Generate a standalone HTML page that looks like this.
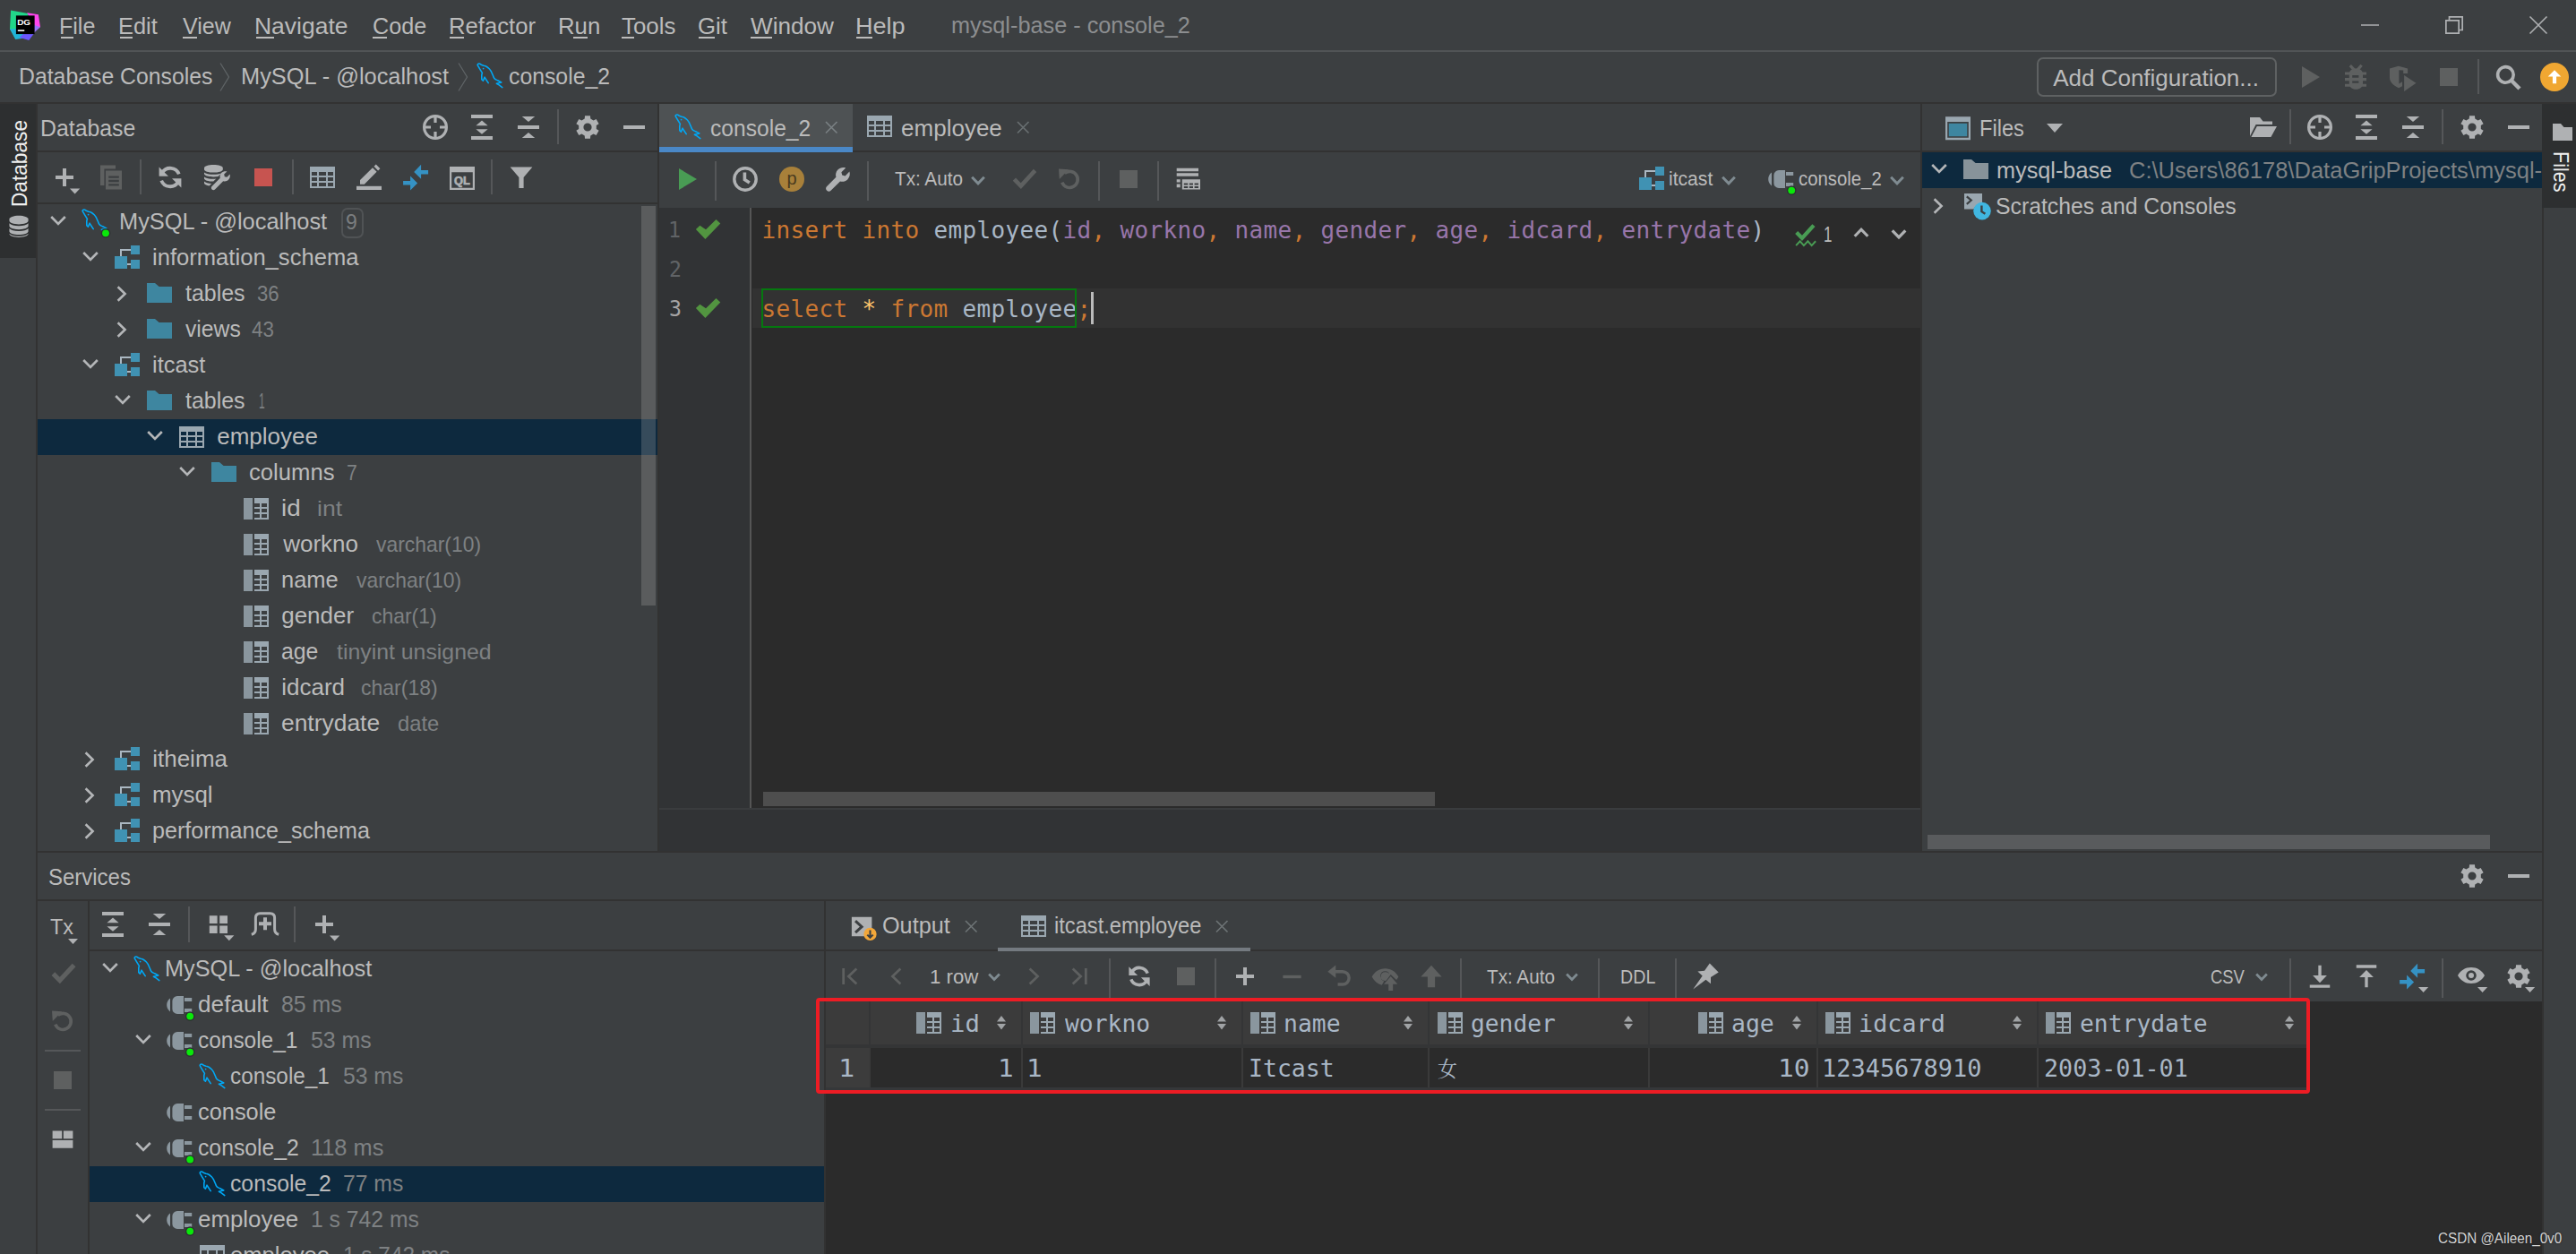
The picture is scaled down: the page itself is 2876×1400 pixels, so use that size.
<!DOCTYPE html>
<html lang="en"><head><meta charset="utf-8"><title>mysql-base - console_2</title>
<style>
html,body{margin:0;padding:0;background:#3c3f41;}
body{width:2876px;height:1400px;position:relative;overflow:hidden;font-family:"Liberation Sans",sans-serif;}
#root,#root div{position:absolute;}
#root>div[id]{left:0;top:0;width:0;height:0;}
#root{left:0;top:0;width:2876px;height:1400px;overflow:hidden;}
#root span{position:absolute;white-space:pre;transform-origin:0 50%;}
#root svg{position:absolute;overflow:visible;}
.mono{font-family:"DejaVu Sans Mono","Liberation Mono",monospace;}
.cjk{font-family:"Liberation Serif","Noto Serif CJK SC",serif;}
</style></head>
<body><div id="root">
<div id="titlebar">
<svg style="left:11.0px;top:11.0px;" width="34" height="34" viewBox="0 0 32 32"><path fill="#21d789" d="M1 0.500L20 4 6 31 0 20z"/><path fill="#22b4d8" d="M0 20l6 11 14-2-3-9z"/><path fill="#9775f8" d="M20 4l12 14-12 11-6-3z"/><path fill="#ff45ed" d="M18 3l12 2 2 13-6-2z"/><path fill="#6b57ff" d="M10 29l10 3 6-8-8-2z"/><rect x="6.500" y="6" width="19.500" height="19.500" fill="#000"/><text x="7.700" y="16.200" font-size="9.400" font-weight="bold" fill="#fff" font-family="Liberation Sans, sans-serif">DG</text><rect x="8.300" y="21" width="7" height="1.500" fill="#fff"/></svg>
<span style="left:66.47px;top:16.30px;font-size:26px;line-height:26px;color:#bbbbbb;transform:scaleX(0.9636);">File</span>
<span style="left:132.44px;top:16.30px;font-size:26px;line-height:26px;color:#bbbbbb;transform:scaleX(0.9776);">Edit</span>
<span style="left:204.40px;top:16.30px;font-size:26px;line-height:26px;color:#bbbbbb;transform:scaleX(0.9624);">View</span>
<span style="left:284.36px;top:16.30px;font-size:26px;line-height:26px;color:#bbbbbb;transform:scaleX(1.0184);">Navigate</span>
<span style="left:415.83px;top:16.30px;font-size:26px;line-height:26px;color:#bbbbbb;transform:scaleX(0.9688);">Code</span>
<span style="left:500.72px;top:16.30px;font-size:26px;line-height:26px;color:#bbbbbb;transform:scaleX(0.9875);">Refactor</span>
<span style="left:623.42px;top:16.30px;font-size:26px;line-height:26px;color:#bbbbbb;transform:scaleX(0.9901);">Run</span>
<span style="left:694.40px;top:16.30px;font-size:26px;line-height:26px;color:#bbbbbb;transform:scaleX(0.9951);">Tools</span>
<span style="left:779.41px;top:16.30px;font-size:26px;line-height:26px;color:#bbbbbb;transform:scaleX(0.9909);">Git</span>
<span style="left:838.40px;top:16.30px;font-size:26px;line-height:26px;color:#bbbbbb;transform:scaleX(1.0054);">Window</span>
<span style="left:954.72px;top:16.30px;font-size:26px;line-height:26px;color:#bbbbbb;transform:scaleX(1.0409);">Help</span>
<div style="left:68px;top:40.5px;width:14px;height:2px;background:#bbbbbb;"></div>
<div style="left:134px;top:40.5px;width:14px;height:2px;background:#bbbbbb;"></div>
<div style="left:204px;top:40.5px;width:16px;height:2px;background:#bbbbbb;"></div>
<div style="left:285.5px;top:40.5px;width:20.0px;height:2px;background:#bbbbbb;"></div>
<div style="left:416px;top:40.5px;width:16px;height:2px;background:#bbbbbb;"></div>
<div style="left:502px;top:40.5px;width:16px;height:2px;background:#bbbbbb;"></div>
<div style="left:640px;top:40.5px;width:16px;height:2px;background:#bbbbbb;"></div>
<div style="left:694px;top:40.5px;width:14px;height:2px;background:#bbbbbb;"></div>
<div style="left:780px;top:40.5px;width:18px;height:2px;background:#bbbbbb;"></div>
<div style="left:838px;top:40.5px;width:24px;height:2px;background:#bbbbbb;"></div>
<div style="left:956px;top:40.5px;width:18px;height:2px;background:#bbbbbb;"></div>
<span style="left:1062.03px;top:14.60px;font-size:26px;line-height:26px;color:#8c8e90;transform:scaleX(0.9718);">mysql-base - console_2</span>
<svg style="left:2636px;top:18px;" width="20" height="20" viewBox="0 0 20 20"><path stroke="#afb1b3" stroke-width="1.500" d="M0 10h20"/></svg>
<svg style="left:2730px;top:18px;" width="20" height="20" viewBox="0 0 20 20"><path fill="none" stroke="#afb1b3" stroke-width="1.700" d="M0.850 4.850h14.300v14.300H0.850zM4.500 4.500V0.850h14.650V15.500H15.500"/></svg>
<svg style="left:2824px;top:18px;" width="20" height="20" viewBox="0 0 20 20"><path stroke="#afb1b3" stroke-width="1.600" d="M0.500 0.500l19 19M19.500 0.500l-19 19"/></svg>
<div style="left:0px;top:56px;width:2876px;height:2px;background:#515456;"></div>
</div>
<div id="navbar">
<span style="left:21.49px;top:72.00px;font-size:26px;line-height:26px;color:#bbbbbb;transform:scaleX(0.9541);">Database Consoles</span>
<svg style="left:244px;top:70px;" width="14" height="32" viewBox="0 0 14 32"><path fill="none" stroke="#5f6466" stroke-width="1.300" d="M2 0.500L11.500 16 2 31.500"/></svg>
<span style="left:269.45px;top:72.00px;font-size:26px;line-height:26px;color:#bbbbbb;transform:scaleX(0.9757);">MySQL - @localhost</span>
<svg style="left:510px;top:70px;" width="14" height="32" viewBox="0 0 14 32"><path fill="none" stroke="#5f6466" stroke-width="1.300" d="M2 0.500L11.500 16 2 31.500"/></svg>
<svg style="left:530.5px;top:68.5px;" width="32" height="32" viewBox="0 0 16 16"><path fill="none" stroke="#00a8f5" stroke-width="0.8" stroke-linejoin="round" stroke-linecap="round" d="M7.100 11.800L5 8.600 4.200 10.600 3.400 9.800V7.400L3.700 6.200 2.450 4.200 1.200 2.100C.900 1.500 1.300 1 2 1c.500 0 .800.500 1.100.600l1.300.500c.600.100 1.100.300 1.600.500.600.300 1.100.800 1.600 1.300.500.500.900 1.100 1.200 1.700l1 2.250c.200.650.400 1.250.800 1.600.500.450 1.100.650 1.700.950l2.100 1.100-2.700.650 1.400.800 1.800 1.350"/><circle cx="4.300" cy="3.800" r="0.450" fill="#00a8f5"/></svg>
<span style="left:568.45px;top:72.00px;font-size:26px;line-height:26px;color:#bbbbbb;transform:scaleX(0.9532);">console_2</span>
<div style="left:2274px;top:64px;width:264px;height:40px;border:2px solid #5e6162;border-radius:7px"></div>
<span style="left:2292.20px;top:74.00px;font-size:26px;line-height:26px;color:#bbbbbb;">Add Configuration...</span>
<svg style="left:2563.0px;top:70.0px;" width="32" height="32" viewBox="0 0 16 16"><path fill="#5e6060" d="M3.5 2l10 6-10 6z"/></svg>
<svg style="left:2614.0px;top:70.0px;" width="32" height="32" viewBox="0 0 16 16"><path stroke="#5e6060" stroke-width="1.600" d="M4.900 1.600L7.400 4.200M11.300 1.400L8.900 4.200"/><path fill="#5e6060" d="M2 5.300h12v1.500H2zM2 8.500h12v1.600H2zM2 11.900h12v1.500H2z"/><path fill="#5e6060" fill-rule="evenodd" d="M4.400 6c0-1.600 1.600-2.800 3.800-2.800S12 4.400 12 6v5.500c0 2-1.600 3.400-3.800 3.400s-3.800-1.400-3.800-3.400zM6.100 7v1.400h3.600V7zM6.100 10.100v1.300h3.600v-1.300z"/></svg>
<svg style="left:2667.0px;top:70.0px;" width="32" height="32" viewBox="0 0 16 16"><path fill="#5e6060" d="M0.500 3.200L5.400 1.900l5.150 1.300v2.750H8.100V4.300L5.700 4.100v7.700l1.800-1.200v2.500l-2 1C2.300 12.600.500 10.600.500 8.400z"/><path fill="#5e6060" d="M8.550 7l6.700 4.400-6.700 4.600z"/></svg>
<svg style="left:2718.0px;top:70.0px;" width="32" height="32" viewBox="0 0 16 16"><rect x="3" y="3" width="10" height="10" fill="#5e6060"/></svg>
<div style="left:2766px;top:66px;width:2px;height:39px;background:#555759;"></div>
<svg style="left:2784.0px;top:70.0px;" width="32" height="32" viewBox="0 0 16 16"><circle cx="6.700" cy="6.700" r="4.400" fill="none" stroke="#afb1b3" stroke-width="1.800"/><path stroke="#afb1b3" stroke-width="2.200" d="M9.900 9.900l4.600 4.600"/></svg>
<svg style="left:2836px;top:70px;" width="32" height="32" viewBox="0 0 32 32"><circle cx="16" cy="16" r="16" fill="#f0a732"/><path fill="#fff" d="M16 8.200l7.300 7.400h-5.200v7.600h-4.200v-7.600H8.700z"/></svg>
<div style="left:0px;top:114px;width:2876px;height:2px;background:#323232;"></div>
</div>
<div id="leftstripe">
<div style="left:0px;top:116px;width:40px;height:172px;background:#2d2f30;"></div>
<div style="left:40px;top:116px;width:2px;height:1284px;background:#323232;"></div>
<span style="left:9.80px;top:230.94px;font-size:24px;line-height:24px;color:#efefef;transform-origin:0 0;transform:rotate(-90deg) scaleX(0.9439);">Database</span>
<svg style="left:8.0px;top:239.0px;" width="26" height="26" viewBox="0 0 16 16"><path fill="#afb1b3" d="M1.500 3.400C1.500 2.100 4.400 1 8 1s6.500 1.100 6.500 2.400v1.200C14.500 5.900 11.600 7 8 7S1.500 5.900 1.500 4.600z"/><path fill="#afb1b3" d="M1.500 6.300c1 1.100 3.500 1.800 6.500 1.800s5.500-.7 6.500-1.800v1.900C14.500 9.500 11.600 10.600 8 10.600S1.500 9.500 1.500 8.200z"/><path fill="#afb1b3" d="M1.500 9.900c1 1.100 3.500 1.800 6.500 1.800s5.500-.7 6.500-1.800v1.900c0 1.300-2.900 2.400-6.500 2.400s-6.500-1.100-6.500-2.400z"/><path fill="#afb1b3" d="M1.500 13.400c1 1.100 3.500 1.800 6.500 1.800s5.500-.7 6.500-1.800v.2C14.500 14.900 11.600 16 8 16s-6.500-1.100-6.500-2.400z"/></svg>
</div>
<div id="dbpanel">
<span style="left:45.49px;top:129.80px;font-size:26px;line-height:26px;color:#bbbbbb;transform:scaleX(0.9555);">Database</span>
<svg style="left:470.0px;top:126.0px;" width="32" height="32" viewBox="0 0 16 16"><circle cx="8" cy="8" r="6.2" fill="none" stroke="#afb1b3" stroke-width="1.6"/><path fill="#afb1b3" d="M7.2 1.5h1.6v4H7.2zM7.2 10.5h1.6v4H7.2zM1.5 7.2h4v1.6h-4zM10.5 7.2h4v1.6h-4z"/></svg>
<svg style="left:522.0px;top:126.0px;" width="32" height="32" viewBox="0 0 16 16"><path fill="#afb1b3" d="M2 1h12v2H2zM2 13h12v2H2zM8 4.300l3.300 2.800H4.700zM8 11.900L4.700 9.100h6.600z"/></svg>
<svg style="left:574.0px;top:126.0px;" width="32" height="32" viewBox="0 0 16 16"><path fill="#afb1b3" d="M2 7h12v2H2zM8 5L4.4 2h7.2zM8 11l3.6 3H4.4z"/></svg>
<div style="left:622px;top:122px;width:2px;height:39px;background:#555759;"></div>
<svg style="left:640.0px;top:126.0px;" width="32" height="32" viewBox="0 0 16 16"><path fill="#afb1b3" fill-rule="evenodd" d="M6.37 3.27 L6.52 1.57 L9.48 1.57 L9.63 3.27 L11.28 4.23 L12.83 3.50 L14.31 6.07 L12.91 7.05 L12.91 8.95 L14.31 9.93 L12.83 12.50 L11.28 11.77 L9.63 12.73 L9.48 14.43 L6.52 14.43 L6.37 12.73 L4.72 11.77 L3.17 12.50 L1.69 9.93 L3.09 8.95 L3.09 7.05 L1.69 6.07 L3.17 3.50 L4.72 4.23Z M5.70 8 a2.3 2.3 0 1 0 4.6 0 a2.3 2.3 0 1 0 -4.6 0Z"/></svg>
<svg style="left:692.0px;top:126.0px;" width="32" height="32" viewBox="0 0 16 16"><rect x="2" y="7" width="12" height="2" fill="#afb1b3"/></svg>
<div style="left:42px;top:168px;width:692px;height:2px;background:#323232;"></div>
<svg style="left:56.0px;top:182.0px;" width="32" height="32" viewBox="0 0 16 16"><path fill="#afb1b3" d="M7 3h2v4h4v2H9v4H7V9H3V7h4z"/><path fill="#afb1b3" d="M11 14.2h5.6l-2.8 3z"/></svg>
<svg style="left:108.0px;top:182.0px;" width="32" height="32" viewBox="0 0 16 16"><path fill="#5e6060" d="M2 1.3h8.5v2H4.2v9.2H2z"/><path fill="#5e6060" fill-rule="evenodd" d="M5 4.2h9v10.6H5zM6.6 7.2v1.2h5.8V7.2zM6.6 9.4v1.2h5.8V9.4zM6.6 11.6v1.2h5.8v-1.2z"/></svg>
<div style="left:156px;top:178px;width:2px;height:39px;background:#555759;"></div>
<svg style="left:174.0px;top:182.0px;" width="32" height="32" viewBox="0 0 16 16"><path fill="none" stroke="#afb1b3" stroke-width="1.9" d="M12.9 6.2A5.2 5.2 0 0 0 3.6 5.4"/><path fill="none" stroke="#afb1b3" stroke-width="1.9" d="M3.1 9.8a5.2 5.2 0 0 0 9.3 0.8"/><path fill="#afb1b3" d="M1.8 2.2v5.2H7zM14.2 13.8V8.6H9z"/></svg>
<svg style="left:226.0px;top:182.0px;" width="32" height="32" viewBox="0 0 16 16"><path fill="#afb1b3" d="M1 2.700C1 1.700 3.400 1 6.200 1s5.200.7 5.200 1.700v.9c0 1-2.400 1.700-5.200 1.700S1 4.600 1 3.600z"/><path fill="#afb1b3" d="M1 5.200c.9.800 2.900 1.200 5.200 1.200 1.700 0 3.300-.3 4.300-.7L8.800 7.500c-.8.100-1.700.2-2.600.2C3.400 7.700 1 7 1 6z"/><path fill="#afb1b3" d="M1 7.700c.9.800 2.900 1.200 5.200 1.200.5 0 1 0 1.500-.1L6.100 10.300C3.300 10.300 1 9.600 1 8.600z"/><path fill="#afb1b3" d="M1 10.300c.8.700 2.300 1.100 4.100 1.200l-1.300 1.200C2.200 12.400 1 11.900 1 11.200z"/><path fill="#afb1b3" d="M15.300 6.300l-1.600 1.600-1.300-.3-.3-1.300 1.600-1.600c-1.100-.3-2.300 0-3.100.8-.8.800-1 1.900-.7 2.900L5.300 13c-.5.500-.5 1.200 0 1.700.5.500 1.200.5 1.700 0l4.600-4.600c1 .3 2.100.1 2.900-.7.800-.8 1.100-2 .8-3.100z"/></svg>
<svg style="left:278.0px;top:182.0px;" width="32" height="32" viewBox="0 0 16 16"><rect x="3" y="3" width="10" height="10" fill="#c75450"/></svg>
<div style="left:326px;top:178px;width:2px;height:39px;background:#555759;"></div>
<svg style="left:344.0px;top:182.0px;" width="32" height="32" viewBox="0 0 16 16"><path fill="#9aa7b0" fill-rule="evenodd" d="M1 2h14v12H1zM2 5v2h3v-2zM6 5v2h4v-2zM11 5v2h3v-2zM2 8v2h3v-2zM6 8v2h4v-2zM11 8v2h3v-2zM2 11v2h3v-2zM6 11v2h4v-2zM11 11v2h3v-2z"/></svg>
<svg style="left:396.0px;top:182.0px;" width="32" height="32" viewBox="0 0 16 16"><path fill="#afb1b3" d="M1 12.900h14V15H1z"/><path fill="#afb1b3" d="M3 11.850V9.550L10 2.600l2.300 2.300-6.900 6.950zM10.750 1.900L11.900 0.800l2.300 2.300-1.150 1.100z"/></svg>
<svg style="left:448.0px;top:182.0px;" width="32" height="32" viewBox="0 0 16 16"><path fill="#3592c4" d="M7.1 5L11.05 0.900V4.050h4v2.150h-4V8.850z"/><path fill="#3592c4" d="M9.050 11.200L5.050 7.200v2.800h-4v2.300h4v2.900z"/></svg>
<svg style="left:500.0px;top:183.0px;" width="32" height="32" viewBox="0 0 16 16"><path fill="#afb1b3" fill-rule="evenodd" d="M1 1.500h14v13H1zM2.100 4.600v8.800h11.800V4.600z"/><text x="8" y="11.500" font-size="6.400" font-weight="bold" text-anchor="middle" fill="#afb1b3" stroke="#afb1b3" stroke-width="0.350" font-family="Liberation Sans, sans-serif">QL</text></svg>
<div style="left:548px;top:178px;width:2px;height:39px;background:#555759;"></div>
<svg style="left:566.0px;top:182.0px;" width="32" height="32" viewBox="0 0 16 16"><path fill="#afb1b3" d="M1.8 2.2h12.4L9.3 8v6H6.7V8z"/></svg>
<div style="left:42px;top:226px;width:692px;height:2px;background:#323232;"></div>
<div style="left:42px;top:468px;width:692px;height:40px;background:#0d293e;"></div>
<svg style="left:49.0px;top:232.0px;" width="32" height="32" viewBox="0 0 16 16"><path fill="none" stroke="#b4b6b8" stroke-width="1.3" d="M4.100 5L8 9l3.900-4"/></svg>
<svg style="left:90.0px;top:232.0px;" width="32" height="32" viewBox="0 0 16 16"><path fill="none" stroke="#00a8f5" stroke-width="0.8" stroke-linejoin="round" stroke-linecap="round" d="M7.100 11.800L5 8.600 4.200 10.600 3.400 9.800V7.400L3.700 6.200 2.450 4.200 1.200 2.100C.900 1.500 1.300 1 2 1c.500 0 .800.500 1.100.600l1.300.500c.600.100 1.100.300 1.600.500.600.300 1.100.800 1.600 1.300.500.500.900 1.100 1.200 1.700l1 2.250c.200.650.400 1.250.800 1.600.500.450 1.100.650 1.700.950l2.100 1.100-2.700.650 1.400.800 1.800 1.350"/><circle cx="4.300" cy="3.800" r="0.450" fill="#00a8f5"/><circle cx="14" cy="14.15" r="2.650" fill="#2d3032"/><circle cx="14" cy="14.15" r="1.950" fill="#0ae80a"/></svg>
<span style="left:133.25px;top:234.30px;font-size:26px;line-height:26px;color:#bbbbbb;transform:scaleX(0.9761);">MySQL - @localhost</span>
<div style="left:381px;top:232px;width:21px;height:30px;border:2px solid #505355;border-radius:7px"></div>
<span style="left:385.94px;top:235.80px;font-size:24px;line-height:24px;color:#7a7d7f;transform:scaleX(0.9583);">9</span>
<svg style="left:85.0px;top:272.0px;" width="32" height="32" viewBox="0 0 16 16"><path fill="none" stroke="#b4b6b8" stroke-width="1.3" d="M4.100 5L8 9l3.900-4"/></svg>
<svg style="left:126.0px;top:272.0px;" width="32" height="32" viewBox="0 0 16 16"><path fill="#aab7c1" d="M4 3h6v1H5v3H4zM8 11h2v1H8z"/><path fill="#4092b3" d="M1 7h7v7H1zM10 9h5v5h-5zM10 1h5v5h-5z"/></svg>
<span style="left:170.22px;top:274.30px;font-size:26px;line-height:26px;color:#bbbbbb;transform:scaleX(0.9844);">information_schema</span>
<svg style="left:121.0px;top:312.0px;" width="32" height="32" viewBox="0 0 16 16"><path fill="none" stroke="#b4b6b8" stroke-width="1.3" d="M5.300 4.100L9.300 8l-4 3.900"/></svg>
<svg style="left:162.0px;top:312.0px;" width="32" height="32" viewBox="0 0 16 16"><path fill="#3e86a0" d="M1 2h4.500l2.300 2H15v9H1z"/></svg>
<span style="left:207.20px;top:314.30px;font-size:26px;line-height:26px;color:#bbbbbb;transform:scaleX(0.9599);">tables</span>
<span style="left:287.40px;top:315.80px;font-size:24px;line-height:24px;color:#7e8183;transform:scaleX(0.9223);">36</span>
<svg style="left:121.0px;top:352.0px;" width="32" height="32" viewBox="0 0 16 16"><path fill="none" stroke="#b4b6b8" stroke-width="1.3" d="M5.300 4.100L9.300 8l-4 3.900"/></svg>
<svg style="left:162.0px;top:352.0px;" width="32" height="32" viewBox="0 0 16 16"><path fill="#3e86a0" d="M1 2h4.500l2.300 2H15v9H1z"/></svg>
<span style="left:207.20px;top:354.30px;font-size:26px;line-height:26px;color:#bbbbbb;transform:scaleX(0.9506);">views</span>
<span style="left:281.40px;top:355.80px;font-size:24px;line-height:24px;color:#7e8183;transform:scaleX(0.9299);">43</span>
<svg style="left:85.0px;top:392.0px;" width="32" height="32" viewBox="0 0 16 16"><path fill="none" stroke="#b4b6b8" stroke-width="1.3" d="M4.100 5L8 9l3.900-4"/></svg>
<svg style="left:126.0px;top:392.0px;" width="32" height="32" viewBox="0 0 16 16"><path fill="#aab7c1" d="M4 3h6v1H5v3H4zM8 11h2v1H8z"/><path fill="#4092b3" d="M1 7h7v7H1zM10 9h5v5h-5zM10 1h5v5h-5z"/></svg>
<span style="left:170.22px;top:394.30px;font-size:26px;line-height:26px;color:#bbbbbb;transform:scaleX(0.9775);">itcast</span>
<svg style="left:121.0px;top:432.0px;" width="32" height="32" viewBox="0 0 16 16"><path fill="none" stroke="#b4b6b8" stroke-width="1.3" d="M4.100 5L8 9l3.900-4"/></svg>
<svg style="left:162.0px;top:432.0px;" width="32" height="32" viewBox="0 0 16 16"><path fill="#3e86a0" d="M1 2h4.500l2.300 2H15v9H1z"/></svg>
<span style="left:207.20px;top:434.30px;font-size:26px;line-height:26px;color:#bbbbbb;transform:scaleX(0.9599);">tables</span>
<span style="left:289.40px;top:435.80px;font-size:24px;line-height:24px;color:#7e8183;transform:scaleX(0.5000);">1</span>
<svg style="left:157.0px;top:472.0px;" width="32" height="32" viewBox="0 0 16 16"><path fill="none" stroke="#b4b6b8" stroke-width="1.3" d="M4.100 5L8 9l3.900-4"/></svg>
<svg style="left:198.0px;top:472.0px;" width="32" height="32" viewBox="0 0 16 16"><path fill="#9aa7b0" fill-rule="evenodd" d="M1 2h14v12H1zM2 5v2h3v-2zM6 5v2h4v-2zM11 5v2h3v-2zM2 8v2h3v-2zM6 8v2h4v-2zM11 8v2h3v-2zM2 11v2h3v-2zM6 11v2h4v-2zM11 11v2h3v-2z"/></svg>
<span style="left:242.20px;top:474.30px;font-size:26px;line-height:26px;color:#bbbbbb;">employee</span>
<svg style="left:193.0px;top:512.0px;" width="32" height="32" viewBox="0 0 16 16"><path fill="none" stroke="#b4b6b8" stroke-width="1.3" d="M4.100 5L8 9l3.900-4"/></svg>
<svg style="left:234.0px;top:512.0px;" width="32" height="32" viewBox="0 0 16 16"><path fill="#3e86a0" d="M1 2h4.500l2.300 2H15v9H1z"/></svg>
<span style="left:278.21px;top:514.30px;font-size:26px;line-height:26px;color:#bbbbbb;transform:scaleX(0.9863);">columns</span>
<span style="left:386.52px;top:515.80px;font-size:24px;line-height:24px;color:#7e8183;transform:scaleX(0.8833);">7</span>
<svg style="left:270.0px;top:552.0px;" width="32" height="32" viewBox="0 0 16 16"><path fill="#8a969e" d="M1 2h5v12H1z"/><path fill="#9aa7b0" fill-rule="evenodd" d="M7 2h8v12H7zM7 5v2h3v-2zM11 5v2h3v-2zM7 8v2h3v-2zM11 8v2h3v-2zM7 11v2h3v-2zM11 11v2h3v-2z"/></svg>
<span style="left:314.13px;top:554.30px;font-size:26px;line-height:26px;color:#bbbbbb;transform:scaleX(1.0688);">id</span>
<span style="left:353.79px;top:555.80px;font-size:24px;line-height:24px;color:#7e8183;transform:scaleX(1.1062);">int</span>
<svg style="left:270.0px;top:592.0px;" width="32" height="32" viewBox="0 0 16 16"><path fill="#8a969e" d="M1 2h5v12H1z"/><path fill="#9aa7b0" fill-rule="evenodd" d="M7 2h8v12H7zM7 5v2h3v-2zM11 5v2h3v-2zM7 8v2h3v-2zM11 8v2h3v-2zM7 11v2h3v-2zM11 11v2h3v-2z"/></svg>
<span style="left:316.20px;top:594.30px;font-size:26px;line-height:26px;color:#bbbbbb;">workno</span>
<span style="left:420.10px;top:595.80px;font-size:24px;line-height:24px;color:#7e8183;transform:scaleX(0.9539);">varchar(10)</span>
<svg style="left:270.0px;top:632.0px;" width="32" height="32" viewBox="0 0 16 16"><path fill="#8a969e" d="M1 2h5v12H1z"/><path fill="#9aa7b0" fill-rule="evenodd" d="M7 2h8v12H7zM7 5v2h3v-2zM11 5v2h3v-2zM7 8v2h3v-2zM11 8v2h3v-2zM7 11v2h3v-2zM11 11v2h3v-2z"/></svg>
<span style="left:314.22px;top:634.30px;font-size:26px;line-height:26px;color:#bbbbbb;transform:scaleX(0.9799);">name</span>
<span style="left:398.00px;top:635.80px;font-size:24px;line-height:24px;color:#7e8183;transform:scaleX(0.9539);">varchar(10)</span>
<svg style="left:270.0px;top:672.0px;" width="32" height="32" viewBox="0 0 16 16"><path fill="#8a969e" d="M1 2h5v12H1z"/><path fill="#9aa7b0" fill-rule="evenodd" d="M7 2h8v12H7zM7 5v2h3v-2zM11 5v2h3v-2zM7 8v2h3v-2zM11 8v2h3v-2zM7 11v2h3v-2zM11 11v2h3v-2z"/></svg>
<span style="left:314.20px;top:674.30px;font-size:26px;line-height:26px;color:#bbbbbb;">gender</span>
<span style="left:415.25px;top:675.80px;font-size:24px;line-height:24px;color:#7e8183;transform:scaleX(0.9537);">char(1)</span>
<svg style="left:270.0px;top:712.0px;" width="32" height="32" viewBox="0 0 16 16"><path fill="#8a969e" d="M1 2h5v12H1z"/><path fill="#9aa7b0" fill-rule="evenodd" d="M7 2h8v12H7zM7 5v2h3v-2zM11 5v2h3v-2zM7 8v2h3v-2zM11 8v2h3v-2zM7 11v2h3v-2zM11 11v2h3v-2z"/></svg>
<span style="left:314.25px;top:714.30px;font-size:26px;line-height:26px;color:#bbbbbb;transform:scaleX(0.9542);">age</span>
<span style="left:376.20px;top:715.80px;font-size:24px;line-height:24px;color:#7e8183;transform:scaleX(1.0349);">tinyint unsigned</span>
<svg style="left:270.0px;top:752.0px;" width="32" height="32" viewBox="0 0 16 16"><path fill="#8a969e" d="M1 2h5v12H1z"/><path fill="#9aa7b0" fill-rule="evenodd" d="M7 2h8v12H7zM7 5v2h3v-2zM11 5v2h3v-2zM7 8v2h3v-2zM11 8v2h3v-2zM7 11v2h3v-2zM11 11v2h3v-2z"/></svg>
<span style="left:314.20px;top:754.30px;font-size:26px;line-height:26px;color:#bbbbbb;">idcard</span>
<span style="left:403.04px;top:755.80px;font-size:24px;line-height:24px;color:#7e8183;transform:scaleX(0.9579);">char(18)</span>
<svg style="left:270.0px;top:792.0px;" width="32" height="32" viewBox="0 0 16 16"><path fill="#8a969e" d="M1 2h5v12H1z"/><path fill="#9aa7b0" fill-rule="evenodd" d="M7 2h8v12H7zM7 5v2h3v-2zM11 5v2h3v-2zM7 8v2h3v-2zM11 8v2h3v-2zM7 11v2h3v-2zM11 11v2h3v-2z"/></svg>
<span style="left:314.18px;top:794.30px;font-size:26px;line-height:26px;color:#bbbbbb;transform:scaleX(1.0155);">entrydate</span>
<span style="left:443.91px;top:795.80px;font-size:24px;line-height:24px;color:#7e8183;transform:scaleX(0.9898);">date</span>
<svg style="left:85.0px;top:832.0px;" width="32" height="32" viewBox="0 0 16 16"><path fill="none" stroke="#b4b6b8" stroke-width="1.3" d="M5.300 4.100L9.300 8l-4 3.900"/></svg>
<svg style="left:126.0px;top:832.0px;" width="32" height="32" viewBox="0 0 16 16"><path fill="#aab7c1" d="M4 3h6v1H5v3H4zM8 11h2v1H8z"/><path fill="#4092b3" d="M1 7h7v7H1zM10 9h5v5h-5zM10 1h5v5h-5z"/></svg>
<span style="left:170.20px;top:834.30px;font-size:26px;line-height:26px;color:#bbbbbb;">itheima</span>
<svg style="left:85.0px;top:872.0px;" width="32" height="32" viewBox="0 0 16 16"><path fill="none" stroke="#b4b6b8" stroke-width="1.3" d="M5.300 4.100L9.300 8l-4 3.900"/></svg>
<svg style="left:126.0px;top:872.0px;" width="32" height="32" viewBox="0 0 16 16"><path fill="#aab7c1" d="M4 3h6v1H5v3H4zM8 11h2v1H8z"/><path fill="#4092b3" d="M1 7h7v7H1zM10 9h5v5h-5zM10 1h5v5h-5z"/></svg>
<span style="left:170.20px;top:874.30px;font-size:26px;line-height:26px;color:#bbbbbb;transform:scaleX(0.9952);">mysql</span>
<svg style="left:85.0px;top:912.0px;" width="32" height="32" viewBox="0 0 16 16"><path fill="none" stroke="#b4b6b8" stroke-width="1.3" d="M5.300 4.100L9.300 8l-4 3.900"/></svg>
<svg style="left:126.0px;top:912.0px;" width="32" height="32" viewBox="0 0 16 16"><path fill="#aab7c1" d="M4 3h6v1H5v3H4zM8 11h2v1H8z"/><path fill="#4092b3" d="M1 7h7v7H1zM10 9h5v5h-5zM10 1h5v5h-5z"/></svg>
<span style="left:170.23px;top:914.30px;font-size:26px;line-height:26px;color:#bbbbbb;transform:scaleX(0.9658);">performance_schema</span>
<div style="left:716px;top:230px;width:16px;height:446px;background:rgba(180,180,180,0.25);"></div>
<div style="left:42px;top:950px;width:2796px;height:2px;background:#323232;"></div>
</div>
<div style="left:734px;top:116px;width:2px;height:834px;background:#323232;"></div>
<div id="editor">
<div style="left:736px;top:116px;width:216px;height:48px;background:#4e5254;"></div>
<div style="left:736px;top:164px;width:216px;height:6px;background:#4a88c7;"></div>
<div style="left:952px;top:168px;width:1192px;height:2px;background:#323232;"></div>
<svg style="left:752.0px;top:126.0px;" width="32" height="32" viewBox="0 0 16 16"><path fill="none" stroke="#00a8f5" stroke-width="0.8" stroke-linejoin="round" stroke-linecap="round" d="M7.100 11.800L5 8.600 4.200 10.600 3.400 9.800V7.400L3.700 6.200 2.450 4.200 1.200 2.100C.900 1.500 1.300 1 2 1c.500 0 .800.500 1.100.600l1.300.500c.600.100 1.100.300 1.600.500.600.300 1.100.800 1.600 1.300.500.500.900 1.100 1.200 1.700l1 2.250c.200.650.400 1.250.800 1.600.500.450 1.100.650 1.700.950l2.100 1.100-2.700.650 1.400.800 1.800 1.350"/><circle cx="4.300" cy="3.800" r="0.450" fill="#00a8f5"/></svg>
<span style="left:792.95px;top:129.80px;font-size:26px;line-height:26px;color:#bbbbbb;transform:scaleX(0.9464);">console_2</span>
<svg style="left:921px;top:135px;" width="14.5" height="14.5" viewBox="0 0 14.5 14.5"><path stroke="#7a8184" stroke-width="1.600" d="M1 1l12.500 12.500M13.500 1L1 13.500"/></svg>
<svg style="left:966.0px;top:125.0px;" width="32" height="32" viewBox="0 0 16 16"><path fill="#9aa7b0" fill-rule="evenodd" d="M1 2h14v12H1zM2 5v2h3v-2zM6 5v2h4v-2zM11 5v2h3v-2zM2 8v2h3v-2zM6 8v2h4v-2zM11 8v2h3v-2zM2 11v2h3v-2zM6 11v2h4v-2zM11 11v2h3v-2z"/></svg>
<span style="left:1006.10px;top:129.80px;font-size:26px;line-height:26px;color:#bbbbbb;">employee</span>
<svg style="left:1135px;top:135px;" width="14.5" height="14.5" viewBox="0 0 14.5 14.5"><path stroke="#6a7072" stroke-width="1.600" d="M1 1l12.500 12.500M13.500 1L1 13.500"/></svg>
<svg style="left:750.5px;top:184.0px;" width="32" height="32" viewBox="0 0 16 16"><path fill="#499c54" d="M3.5 2l10 6-10 6z"/></svg>
<div style="left:798px;top:180px;width:2px;height:43.5px;background:#555759;"></div>
<svg style="left:816.0px;top:184.0px;" width="32" height="32" viewBox="0 0 16 16"><circle cx="8" cy="8" r="6.1" fill="none" stroke="#afb1b3" stroke-width="1.7"/><path fill="none" stroke="#afb1b3" stroke-width="1.800" d="M7.700 4.200v4.100l2.700 1.700"/></svg>
<svg style="left:868.0px;top:184.0px;" width="32" height="32" viewBox="0 0 16 16"><circle cx="8" cy="8" r="7" fill="#a8803a"/><text x="8" y="11.1" font-size="10" text-anchor="middle" fill="#4a3a1e" font-family="Liberation Sans, sans-serif">p</text></svg>
<svg style="left:920.0px;top:184.0px;" width="32" height="32" viewBox="0 0 16 16"><path fill="#afb1b3" d="M13.9 3.2l-2.4 2.4-1.7-.4-.4-1.7 2.4-2.4c-1.6-.5-3.3-.1-4.4 1.1-1.1 1.1-1.4 2.7-1 4.1L1.2 11.5c-.6.6-.6 1.6 0 2.2l.1.1c.6.6 1.6.6 2.2 0l5.2-5.2c1.4.4 3 .1 4.1-1 1.200-1.200 1.600-2.900 1.100-4.400z" transform="translate(0.3,0.6)"/></svg>
<div style="left:968px;top:180px;width:2px;height:43.5px;background:#555759;"></div>
<span style="left:998.80px;top:189.30px;font-size:22px;line-height:22px;color:#bbbbbb;transform:scaleX(0.9414);">Tx: Auto</span>
<svg style="left:1078.0px;top:189.0px;" width="28" height="28" viewBox="0 0 16 16"><path fill="none" stroke="#7f8b91" stroke-width="1.7" d="M4.100 5L8 9l3.900-4"/></svg>
<svg style="left:1127.5px;top:182.5px;" width="32" height="32" viewBox="0 0 16 16"><path fill="none" stroke="#5e6060" stroke-width="2.3" d="M2.2 8.6l3.700 3.700 7.900-8.600"/></svg>
<svg style="left:1178.0px;top:184.0px;" width="32" height="32" viewBox="0 0 16 16"><path fill="none" stroke="#5e6060" stroke-width="1.800" d="M5.300 4.700A4.500 4.500 0 1 1 3.900 9.800"/><path fill="#5e6060" d="M2 2.300l5.600.3L2.400 8z"/></svg>
<div style="left:1226px;top:180px;width:2px;height:43.5px;background:#555759;"></div>
<svg style="left:1244.0px;top:184.0px;" width="32" height="32" viewBox="0 0 16 16"><rect x="3" y="3" width="10" height="10" fill="#5e6060"/></svg>
<div style="left:1292px;top:180px;width:2px;height:43.5px;background:#555759;"></div>
<svg style="left:1311.0px;top:184.0px;" width="32" height="32" viewBox="0 0 16 16"><path fill="#afb1b3" d="M1.350 1.850h12.150v1.750H1.350zM1.350 4.650h12.150v1.750H1.350zM1.350 8.100h2v1.700h-2zM1.350 10.800h2v1.800h-2z"/><path fill="#afb1b3" fill-rule="evenodd" d="M4.400 8.100h10.100v5.700H4.400zM5.400 10.200v1.100h2.200v-1.100zM8.400 10.200v1.100h2.100v-1.100zM11.300 10.200v1.100h2.200v-1.100zM5.400 12v1h2.200v-1zM8.400 12v1h2.100v-1zM11.300 12v1h2.200v-1z"/></svg>
<svg style="left:1828.0px;top:184.0px;" width="32" height="32" viewBox="0 0 16 16"><path fill="#aab7c1" d="M4 3h6v1H5v3H4zM8 11h2v1H8z"/><path fill="#4092b3" d="M1 7h7v7H1zM10 9h5v5h-5zM10 1h5v5h-5z"/></svg>
<span style="left:1863.44px;top:189.30px;font-size:22px;line-height:22px;color:#bbbbbb;transform:scaleX(0.9595);">itcast</span>
<svg style="left:1916.0px;top:189.0px;" width="28" height="28" viewBox="0 0 16 16"><path fill="none" stroke="#7f8b91" stroke-width="1.7" d="M4.100 5L8 9l3.900-4"/></svg>
<svg style="left:1972.8px;top:184.0px;" width="32" height="32" viewBox="0 0 16 16"><path fill="#8b979f" d="M2.500 4.300C1.200 5.300.600 6.600.600 8s.600 2.700 1.900 3.700z"/><path fill="#8b979f" d="M6.500 3H10v10H6.500a2.800 2.800 0 0 1-2.800-2.800V5.800A2.800 2.800 0 0 1 6.500 3z"/><path fill="#8b979f" d="M10.500 4h4.100v2h-4.100zM10.500 10h4.100v2h-4.100z"/><circle cx="13.600" cy="14.300" r="2.650" fill="#2d3032"/><circle cx="13.600" cy="14.300" r="1.950" fill="#0ae80a"/></svg>
<span style="left:2008.10px;top:189.30px;font-size:22px;line-height:22px;color:#bbbbbb;transform:scaleX(0.9244);">console_2</span>
<svg style="left:2104.0px;top:189.0px;" width="28" height="28" viewBox="0 0 16 16"><path fill="none" stroke="#7f8b91" stroke-width="1.7" d="M4.100 5L8 9l3.900-4"/></svg>
<div style="left:736px;top:232px;width:1408px;height:670px;background:#2b2b2b;"></div>
<div style="left:736px;top:232px;width:102px;height:670px;background:#313335;"></div>
<div style="left:837px;top:232px;width:2px;height:670px;background:#555555;"></div>
<div style="left:840px;top:322px;width:1304px;height:44px;background:#323232;"></div>
<span class="mono" style="left:850.40px;top:243.60px;font-size:26px;line-height:26px;color:#cc7832;letter-spacing:0.35px;">insert into </span>
<span class="mono" style="left:1042.40px;top:243.60px;font-size:26px;line-height:26px;color:#a9b7c6;letter-spacing:0.35px;">employee(</span>
<span class="mono" style="left:1186.40px;top:243.60px;font-size:26px;line-height:26px;color:#9876aa;letter-spacing:0.35px;">id</span>
<span class="mono" style="left:1218.40px;top:243.60px;font-size:26px;line-height:26px;color:#cc7832;letter-spacing:0.35px;">, </span>
<span class="mono" style="left:1250.40px;top:243.60px;font-size:26px;line-height:26px;color:#9876aa;letter-spacing:0.35px;">workno</span>
<span class="mono" style="left:1346.40px;top:243.60px;font-size:26px;line-height:26px;color:#cc7832;letter-spacing:0.35px;">, </span>
<span class="mono" style="left:1378.40px;top:243.60px;font-size:26px;line-height:26px;color:#9876aa;letter-spacing:0.35px;">name</span>
<span class="mono" style="left:1442.40px;top:243.60px;font-size:26px;line-height:26px;color:#cc7832;letter-spacing:0.35px;">, </span>
<span class="mono" style="left:1474.40px;top:243.60px;font-size:26px;line-height:26px;color:#9876aa;letter-spacing:0.35px;">gender</span>
<span class="mono" style="left:1570.40px;top:243.60px;font-size:26px;line-height:26px;color:#cc7832;letter-spacing:0.35px;">, </span>
<span class="mono" style="left:1602.40px;top:243.60px;font-size:26px;line-height:26px;color:#9876aa;letter-spacing:0.35px;">age</span>
<span class="mono" style="left:1650.40px;top:243.60px;font-size:26px;line-height:26px;color:#cc7832;letter-spacing:0.35px;">, </span>
<span class="mono" style="left:1682.40px;top:243.60px;font-size:26px;line-height:26px;color:#9876aa;letter-spacing:0.35px;">idcard</span>
<span class="mono" style="left:1778.40px;top:243.60px;font-size:26px;line-height:26px;color:#cc7832;letter-spacing:0.35px;">, </span>
<span class="mono" style="left:1810.40px;top:243.60px;font-size:26px;line-height:26px;color:#9876aa;letter-spacing:0.35px;">entrydate</span>
<span class="mono" style="left:1954.40px;top:243.60px;font-size:26px;line-height:26px;color:#a9b7c6;letter-spacing:0.35px;">)</span>
<span class="mono" style="left:850.40px;top:331.60px;font-size:26px;line-height:26px;color:#cc7832;letter-spacing:0.35px;">select </span>
<span class="mono" style="left:962.40px;top:331.60px;font-size:26px;line-height:26px;color:#ffc66d;letter-spacing:0.35px;">* </span>
<span class="mono" style="left:994.40px;top:331.60px;font-size:26px;line-height:26px;color:#cc7832;letter-spacing:0.35px;">from </span>
<span class="mono" style="left:1074.40px;top:331.60px;font-size:26px;line-height:26px;color:#a9b7c6;letter-spacing:0.35px;">employee</span>
<span class="mono" style="left:1202.40px;top:331.60px;font-size:26px;line-height:26px;color:#cc7832;letter-spacing:0.35px;">;</span>
<div style="left:850px;top:322px;width:348px;height:40px;border:2px solid #05780f"></div>
<div style="left:1217.5px;top:326px;width:3.5px;height:36px;background:#bbbbbb;"></div>
<span class="mono" style="left:745.60px;top:244.85px;font-size:24.5px;line-height:24.5px;color:#606366;transform:scaleX(0.9500);">1</span>
<span class="mono" style="left:746.55px;top:288.85px;font-size:24.5px;line-height:24.5px;color:#606366;transform:scaleX(0.9500);">2</span>
<span class="mono" style="left:746.55px;top:332.85px;font-size:24.5px;line-height:24.5px;color:#a4a3a3;transform:scaleX(0.9500);">3</span>
<svg style="left:776px;top:244px;" width="30" height="24" viewBox="0 0 30 24"><path fill="#529540" d="M0.900 12L5.400 7.700 12.050 12.300 23.500 0.900 28.300 5.600 11.400 22.900z"/></svg>
<svg style="left:776px;top:332px;" width="30" height="24" viewBox="0 0 30 24"><path fill="#529540" d="M0.900 12L5.400 7.700 12.050 12.300 23.500 0.900 28.300 5.600 11.400 22.900z"/></svg>
<svg style="left:2003.0px;top:248.0px;" width="25" height="25" viewBox="0 0 14 14"><path fill="none" stroke="#499c54" stroke-width="2.400" d="M1.500 6.500l3.500 3.500L12.300 2"/><path fill="none" stroke="#499c54" stroke-width="1.100" d="M1.200 14.600l2.500-2.700 2.400 2.700 2.500-2.700 2.400 2.700 2.500-2.700"/></svg>
<span style="left:2035.69px;top:249.50px;font-size:24px;line-height:24px;color:#bbbbbb;transform:scaleX(0.7083);">1</span>
<svg style="left:2063.0px;top:244.5px;" width="30" height="30" viewBox="0 0 16 16"><path fill="none" stroke="#afb1b3" stroke-width="1.7" d="M4.100 10L8 6l3.900 4"/></svg>
<svg style="left:2105.0px;top:247.5px;" width="30" height="30" viewBox="0 0 16 16"><path fill="none" stroke="#afb1b3" stroke-width="1.7" d="M4.100 5L8 9l3.900-4"/></svg>
<div style="left:852px;top:884px;width:750px;height:16px;background:#4e4e4e;"></div>
<div style="left:736px;top:902px;width:1408px;height:48px;background:#313335;"></div>
<div style="left:736px;top:902px;width:1408px;height:2px;background:#3a3c3e;"></div>
</div>
<div style="left:2144px;top:116px;width:2px;height:834px;background:#323232;"></div>
<div id="filespanel">
<svg style="left:2170.0px;top:127.0px;" width="32" height="32" viewBox="0 0 16 16"><path fill="#9aa7b0" fill-rule="evenodd" d="M1 1.600h14v13H1zM2.100 4.500v8.900h11.800V4.500z"/><rect x="2.900" y="5.400" width="10.200" height="7.200" fill="#3e86a0"/></svg>
<span style="left:2209.89px;top:129.80px;font-size:26px;line-height:26px;color:#bbbbbb;transform:scaleX(0.9075);">Files</span>
<svg style="left:2278.0px;top:126.0px;" width="32" height="32" viewBox="0 0 16 16"><path fill="#afb1b3" d="M3.500 6h9L8 11z"/></svg>
<svg style="left:2510.0px;top:126.0px;" width="32" height="32" viewBox="0 0 16 16"><path fill="#afb1b3" d="M1 13V2.500h5.500l1.800 2.300h5.200v1.700H4.300L1 13z"/><path fill="#afb1b3" d="M4.900 7.500H16L12.700 13.500H1.700z"/></svg>
<div style="left:2556px;top:122px;width:2px;height:39px;background:#555759;"></div>
<svg style="left:2574.0px;top:126.0px;" width="32" height="32" viewBox="0 0 16 16"><circle cx="8" cy="8" r="6.2" fill="none" stroke="#afb1b3" stroke-width="1.6"/><path fill="#afb1b3" d="M7.2 1.5h1.6v4H7.2zM7.2 10.5h1.6v4H7.2zM1.5 7.2h4v1.6h-4zM10.5 7.2h4v1.6h-4z"/></svg>
<svg style="left:2626.0px;top:126.0px;" width="32" height="32" viewBox="0 0 16 16"><path fill="#afb1b3" d="M2 1h12v2H2zM2 13h12v2H2zM8 4.300l3.300 2.800H4.700zM8 11.900L4.700 9.100h6.600z"/></svg>
<svg style="left:2678.0px;top:126.0px;" width="32" height="32" viewBox="0 0 16 16"><path fill="#afb1b3" d="M2 7h12v2H2zM8 5L4.4 2h7.2zM8 11l3.6 3H4.4z"/></svg>
<div style="left:2726px;top:122px;width:2px;height:39px;background:#555759;"></div>
<svg style="left:2744.0px;top:126.0px;" width="32" height="32" viewBox="0 0 16 16"><path fill="#afb1b3" fill-rule="evenodd" d="M6.37 3.27 L6.52 1.57 L9.48 1.57 L9.63 3.27 L11.28 4.23 L12.83 3.50 L14.31 6.07 L12.91 7.05 L12.91 8.95 L14.31 9.93 L12.83 12.50 L11.28 11.77 L9.63 12.73 L9.48 14.43 L6.52 14.43 L6.37 12.73 L4.72 11.77 L3.17 12.50 L1.69 9.93 L3.09 8.95 L3.09 7.05 L1.69 6.07 L3.17 3.50 L4.72 4.23Z M5.70 8 a2.3 2.3 0 1 0 4.6 0 a2.3 2.3 0 1 0 -4.6 0Z"/></svg>
<svg style="left:2796.0px;top:126.0px;" width="32" height="32" viewBox="0 0 16 16"><rect x="2" y="7" width="12" height="2" fill="#afb1b3"/></svg>
<div style="left:2146px;top:168px;width:692px;height:2px;background:#323232;"></div>
<div style="left:2146px;top:170px;width:692px;height:40px;background:#0d293e;"></div>
<svg style="left:2149.0px;top:174.0px;" width="32" height="32" viewBox="0 0 16 16"><path fill="none" stroke="#b4b6b8" stroke-width="1.3" d="M4.100 5L8 9l3.900-4"/></svg>
<svg style="left:2190.0px;top:174.0px;" width="32" height="32" viewBox="0 0 16 16"><path fill="#87939a" d="M1 2h4.500l2.300 2H15v9H1z"/></svg>
<span style="left:2228.73px;top:176.60px;font-size:26px;line-height:26px;color:#bbbbbb;transform:scaleX(0.9713);">mysql-base</span>
<div style="left:2370px;top:170px;width:468px;height:40px;overflow:hidden">
<span style="left:7.02px;top:6.60px;font-size:26px;line-height:26px;color:#7e8183;transform:scaleX(0.9819);">C:\Users\86178\DataGripProjects\mysql-base</span>
</div>
<svg style="left:2149.0px;top:214.0px;" width="32" height="32" viewBox="0 0 16 16"><path fill="none" stroke="#b4b6b8" stroke-width="1.3" d="M5.300 4.100L9.300 8l-4 3.900"/></svg>
<svg style="left:2191.0px;top:213.0px;" width="32" height="32" viewBox="0 0 16 16"><path fill="#9aa7b0" d="M1 1.500h10v6.200A5 5 0 0 0 6.200 10.200H1z"/><path fill="none" stroke="#3c3f41" stroke-width="1.100" d="M2.400 3.200l2.500 2.100-2.500 2.100"/><circle cx="11" cy="11.300" r="4.900" fill="#40b6e0"/><path fill="none" stroke="#3c3f41" stroke-width="1.200" d="M10.700 8.300v3.300l2 1.300"/></svg>
<span style="left:2228.25px;top:216.60px;font-size:26px;line-height:26px;color:#bbbbbb;transform:scaleX(0.9533);">Scratches and Consoles</span>
<div style="left:2152px;top:932px;width:628px;height:16px;background:#595b5d;"></div>
</div>
<div id="rightstripe">
<div style="left:2838px;top:116px;width:2px;height:1284px;background:#323232;"></div>
<div style="left:2838px;top:116px;width:38px;height:116px;background:#2d2f30;"></div>
<svg style="left:2849px;top:136px;" width="24" height="22" viewBox="0 0 24 22"><path fill="#afb1b3" d="M1 2h9l3.500 4H23v15H1z"/></svg>
<span style="left:2870.70px;top:168.90px;font-size:24px;line-height:24px;color:#efefef;transform-origin:0 0;transform:rotate(90deg) scaleX(0.8999);">Files</span>
</div>
<div id="services">
<span style="left:54.48px;top:965.70px;font-size:26px;line-height:26px;color:#bbbbbb;transform:scaleX(0.9220);">Services</span>
<svg style="left:2744.0px;top:962.0px;" width="32" height="32" viewBox="0 0 16 16"><path fill="#afb1b3" fill-rule="evenodd" d="M6.37 3.27 L6.52 1.57 L9.48 1.57 L9.63 3.27 L11.28 4.23 L12.83 3.50 L14.31 6.07 L12.91 7.05 L12.91 8.95 L14.31 9.93 L12.83 12.50 L11.28 11.77 L9.63 12.73 L9.48 14.43 L6.52 14.43 L6.37 12.73 L4.72 11.77 L3.17 12.50 L1.69 9.93 L3.09 8.95 L3.09 7.05 L1.69 6.07 L3.17 3.50 L4.72 4.23Z M5.70 8 a2.3 2.3 0 1 0 4.6 0 a2.3 2.3 0 1 0 -4.6 0Z"/></svg>
<svg style="left:2796.0px;top:962.0px;" width="32" height="32" viewBox="0 0 16 16"><rect x="2" y="7" width="12" height="2" fill="#afb1b3"/></svg>
<div style="left:42px;top:1004px;width:2796px;height:2px;background:#323232;"></div>
<div style="left:98px;top:1006px;width:2px;height:394px;background:#323232;"></div>
<span style="left:56.10px;top:1022.90px;font-size:24px;line-height:24px;color:#bbbbbb;transform:scaleX(0.9752);">Tx</span>
<svg style="left:76.4px;top:1047.8px;" width="12" height="7" viewBox="0 0 12 7"><path fill="#afb1b3" d="M0 0h11L5.500 6z"/></svg>
<svg style="left:55.0px;top:1070.0px;" width="32" height="32" viewBox="0 0 16 16"><path fill="none" stroke="#5e6060" stroke-width="2.6" d="M2.2 8.6l3.700 3.700 7.900-8.600"/></svg>
<svg style="left:54.0px;top:1124.0px;" width="32" height="32" viewBox="0 0 16 16"><path fill="none" stroke="#5e6060" stroke-width="1.800" d="M5.300 4.700A4.500 4.500 0 1 1 3.900 9.800"/><path fill="#5e6060" d="M2 2.300l5.600.3L2.400 8z"/></svg>
<div style="left:50px;top:1172px;width:40px;height:2px;background:#555759;"></div>
<div style="left:60px;top:1196px;width:20px;height:20px;background:#5e6060;"></div>
<div style="left:50px;top:1238px;width:40px;height:2px;background:#555759;"></div>
<svg style="left:56.0px;top:1258.0px;" width="28" height="28" viewBox="0 0 16 16"><path fill="#afb1b3" d="M1.500 2.500h6v5h-6zM8.500 2.500h6v5h-6zM1.500 8.500h13v5h-13z"/></svg>
<svg style="left:110.0px;top:1016.0px;" width="32" height="32" viewBox="0 0 16 16"><path fill="#afb1b3" d="M2 1h12v2H2zM2 13h12v2H2zM8 4.300l3.300 2.800H4.700zM8 11.900L4.700 9.100h6.600z"/></svg>
<svg style="left:162.0px;top:1016.0px;" width="32" height="32" viewBox="0 0 16 16"><path fill="#afb1b3" d="M2 7h12v2H2zM8 5L4.4 2h7.2zM8 11l3.6 3H4.4z"/></svg>
<div style="left:210px;top:1012px;width:2px;height:40px;background:#555759;"></div>
<svg style="left:231.0px;top:1016.0px;" width="32" height="32" viewBox="0 0 16 16"><path fill="#afb1b3" d="M1.400 3.100h4.400v4.400H1.400zM7.100 3.100h4.400v4.400H7.100zM1.400 8.700h4.400v4.300H1.400zM7.100 8.700h4.400v4.300H7.100z"/><path fill="#afb1b3" d="M9.6 14.1h5.6l-2.8 3z"/></svg>
<svg style="left:280.0px;top:1016.0px;" width="32" height="32" viewBox="0 0 16 16"><path fill="none" stroke="#afb1b3" stroke-width="1.500" d="M0.400 13.600c1.600-.400 2.300-1.300 2.300-3V4.400c0-1.600.900-2.500 2.500-2.500h5.600c1.600 0 2.500.900 2.500 2.500v6.200c0 1.700.700 2.600 2.300 3"/><path fill="#afb1b3" d="M7 4.100h2v2.500h2.500v2H9v2.500H7V8.600H4.500v-2H7z"/></svg>
<div style="left:328px;top:1012px;width:2px;height:40px;background:#555759;"></div>
<svg style="left:346.0px;top:1016.3px;" width="32" height="32" viewBox="0 0 16 16"><path fill="#afb1b3" d="M7 3h2v4h4v2H9v4H7V9H3V7h4z"/><path fill="#afb1b3" d="M11 14.2h5.6l-2.8 3z"/></svg>
<div style="left:100px;top:1060px;width:820px;height:2px;background:#323232;"></div>
<div style="left:100px;top:1302px;width:820px;height:40px;background:#0d293e;"></div>
<svg style="left:107.0px;top:1066.0px;" width="32" height="32" viewBox="0 0 16 16"><path fill="none" stroke="#b4b6b8" stroke-width="1.3" d="M4.100 5L8 9l3.900-4"/></svg>
<svg style="left:148.0px;top:1066.0px;" width="32" height="32" viewBox="0 0 16 16"><path fill="none" stroke="#00a8f5" stroke-width="0.8" stroke-linejoin="round" stroke-linecap="round" d="M7.100 11.800L5 8.600 4.200 10.600 3.400 9.800V7.400L3.700 6.200 2.450 4.200 1.200 2.100C.900 1.500 1.300 1 2 1c.500 0 .800.500 1.100.600l1.300.500c.600.100 1.100.300 1.600.500.600.300 1.100.800 1.600 1.300.500.500.900 1.100 1.200 1.700l1 2.250c.200.650.400 1.250.800 1.600.500.450 1.100.650 1.700.950l2.100 1.100-2.700.650 1.400.800 1.800 1.350"/><circle cx="4.300" cy="3.800" r="0.450" fill="#00a8f5"/></svg>
<span style="left:184.46px;top:1068.20px;font-size:26px;line-height:26px;color:#bbbbbb;transform:scaleX(0.9723);">MySQL - @localhost</span>
<svg style="left:185.0px;top:1106.0px;" width="32" height="32" viewBox="0 0 16 16"><path fill="#8b979f" d="M2.500 4.300C1.200 5.300.600 6.600.600 8s.600 2.700 1.900 3.700z"/><path fill="#8b979f" d="M6.500 3H10v10H6.500a2.800 2.800 0 0 1-2.800-2.800V5.800A2.800 2.800 0 0 1 6.500 3z"/><path fill="#8b979f" d="M10.500 4h4.100v2h-4.100zM10.500 10h4.100v2h-4.100z"/><circle cx="13.600" cy="14.300" r="2.650" fill="#2d3032"/><circle cx="13.600" cy="14.300" r="1.950" fill="#0ae80a"/></svg>
<span style="left:221.39px;top:1108.20px;font-size:26px;line-height:26px;color:#bbbbbb;transform:scaleX(1.0072);">default</span>
<span style="left:313.54px;top:1108.20px;font-size:26px;line-height:26px;color:#7e8183;transform:scaleX(0.9570);">85 ms</span>
<svg style="left:143.5px;top:1146.0px;" width="32" height="32" viewBox="0 0 16 16"><path fill="none" stroke="#b4b6b8" stroke-width="1.3" d="M4.100 5L8 9l3.900-4"/></svg>
<svg style="left:185.0px;top:1146.0px;" width="32" height="32" viewBox="0 0 16 16"><path fill="#8b979f" d="M2.500 4.300C1.200 5.300.600 6.600.600 8s.600 2.700 1.900 3.700z"/><path fill="#8b979f" d="M6.500 3H10v10H6.500a2.800 2.800 0 0 1-2.800-2.800V5.800A2.800 2.800 0 0 1 6.500 3z"/><path fill="#8b979f" d="M10.500 4h4.100v2h-4.100zM10.500 10h4.100v2h-4.100z"/><circle cx="13.600" cy="14.300" r="2.650" fill="#2d3032"/><circle cx="13.600" cy="14.300" r="1.950" fill="#0ae80a"/></svg>
<span style="left:221.46px;top:1148.20px;font-size:26px;line-height:26px;color:#bbbbbb;transform:scaleX(0.9396);">console_1</span>
<span style="left:346.54px;top:1148.20px;font-size:26px;line-height:26px;color:#7e8183;transform:scaleX(0.9570);">53 ms</span>
<svg style="left:220.5px;top:1186.0px;" width="32" height="32" viewBox="0 0 16 16"><path fill="none" stroke="#00a8f5" stroke-width="0.8" stroke-linejoin="round" stroke-linecap="round" d="M7.100 11.800L5 8.600 4.200 10.600 3.400 9.800V7.400L3.700 6.200 2.450 4.200 1.200 2.100C.900 1.500 1.300 1 2 1c.500 0 .800.500 1.100.600l1.300.500c.600.100 1.100.300 1.600.500.600.300 1.100.800 1.600 1.300.500.500.900 1.100 1.200 1.700l1 2.250c.200.650.400 1.250.800 1.600.500.450 1.100.650 1.700.950l2.100 1.100-2.700.650 1.400.800 1.800 1.350"/><circle cx="4.300" cy="3.800" r="0.450" fill="#00a8f5"/></svg>
<span style="left:257.46px;top:1188.20px;font-size:26px;line-height:26px;color:#bbbbbb;transform:scaleX(0.9353);">console_1</span>
<span style="left:382.95px;top:1188.20px;font-size:26px;line-height:26px;color:#7e8183;transform:scaleX(0.9498);">53 ms</span>
<svg style="left:185.0px;top:1226.0px;" width="32" height="32" viewBox="0 0 16 16"><path fill="#8b979f" d="M2.500 4.300C1.200 5.300.600 6.600.600 8s.600 2.700 1.900 3.700z"/><path fill="#8b979f" d="M6.500 3H10v10H6.500a2.800 2.800 0 0 1-2.800-2.800V5.800A2.800 2.800 0 0 1 6.500 3z"/><path fill="#8b979f" d="M10.500 4h4.100v2h-4.100zM10.500 10h4.100v2h-4.100z"/></svg>
<span style="left:221.42px;top:1228.20px;font-size:26px;line-height:26px;color:#bbbbbb;transform:scaleX(0.9755);">console</span>
<svg style="left:143.5px;top:1266.0px;" width="32" height="32" viewBox="0 0 16 16"><path fill="none" stroke="#b4b6b8" stroke-width="1.3" d="M4.100 5L8 9l3.900-4"/></svg>
<svg style="left:185.0px;top:1266.0px;" width="32" height="32" viewBox="0 0 16 16"><path fill="#8b979f" d="M2.500 4.300C1.200 5.300.600 6.600.600 8s.600 2.700 1.900 3.700z"/><path fill="#8b979f" d="M6.500 3H10v10H6.500a2.800 2.800 0 0 1-2.800-2.800V5.800A2.800 2.800 0 0 1 6.500 3z"/><path fill="#8b979f" d="M10.500 4h4.100v2h-4.100zM10.500 10h4.100v2h-4.100z"/><circle cx="13.600" cy="14.300" r="2.650" fill="#2d3032"/><circle cx="13.600" cy="14.300" r="1.950" fill="#0ae80a"/></svg>
<span style="left:221.45px;top:1268.20px;font-size:26px;line-height:26px;color:#bbbbbb;transform:scaleX(0.9515);">console_2</span>
<span style="left:346.52px;top:1268.20px;font-size:26px;line-height:26px;color:#7e8183;transform:scaleX(0.9765);">118 ms</span>
<svg style="left:220.5px;top:1306.0px;" width="32" height="32" viewBox="0 0 16 16"><path fill="none" stroke="#00a8f5" stroke-width="0.8" stroke-linejoin="round" stroke-linecap="round" d="M7.100 11.800L5 8.600 4.200 10.600 3.400 9.800V7.400L3.700 6.200 2.450 4.200 1.200 2.100C.900 1.500 1.300 1 2 1c.500 0 .800.500 1.100.600l1.300.500c.600.100 1.100.300 1.600.500.600.300 1.100.800 1.600 1.300.500.500.900 1.100 1.200 1.700l1 2.250c.200.650.400 1.250.800 1.600.500.450 1.100.650 1.700.950l2.100 1.100-2.700.650 1.400.800 1.800 1.350"/><circle cx="4.300" cy="3.800" r="0.450" fill="#00a8f5"/></svg>
<span style="left:257.45px;top:1308.20px;font-size:26px;line-height:26px;color:#bbbbbb;transform:scaleX(0.9515);">console_2</span>
<span style="left:382.95px;top:1308.20px;font-size:26px;line-height:26px;color:#7e8183;transform:scaleX(0.9498);">77 ms</span>
<svg style="left:143.5px;top:1346.0px;" width="32" height="32" viewBox="0 0 16 16"><path fill="none" stroke="#b4b6b8" stroke-width="1.3" d="M4.100 5L8 9l3.900-4"/></svg>
<svg style="left:185.0px;top:1346.0px;" width="32" height="32" viewBox="0 0 16 16"><path fill="#8b979f" d="M2.500 4.300C1.200 5.300.600 6.600.600 8s.600 2.700 1.900 3.700z"/><path fill="#8b979f" d="M6.500 3H10v10H6.500a2.800 2.800 0 0 1-2.800-2.800V5.800A2.800 2.800 0 0 1 6.500 3z"/><path fill="#8b979f" d="M10.500 4h4.100v2h-4.100zM10.500 10h4.100v2h-4.100z"/><circle cx="13.600" cy="14.300" r="2.650" fill="#2d3032"/><circle cx="13.600" cy="14.300" r="1.950" fill="#0ae80a"/></svg>
<span style="left:221.41px;top:1348.20px;font-size:26px;line-height:26px;color:#bbbbbb;transform:scaleX(0.9948);">employee</span>
<span style="left:346.55px;top:1348.20px;font-size:26px;line-height:26px;color:#7e8183;transform:scaleX(0.9503);">1 s 742 ms</span>
<svg style="left:220.5px;top:1386.0px;" width="32" height="32" viewBox="0 0 16 16"><path fill="#9aa7b0" fill-rule="evenodd" d="M1 2h14v12H1zM2 5v2h3v-2zM6 5v2h4v-2zM11 5v2h3v-2zM2 8v2h3v-2zM6 8v2h4v-2zM11 8v2h3v-2zM2 11v2h3v-2zM6 11v2h4v-2zM11 11v2h3v-2z"/></svg>
<span style="left:257.42px;top:1388.20px;font-size:26px;line-height:26px;color:#bbbbbb;transform:scaleX(0.9841);">employee</span>
<span style="left:382.96px;top:1388.20px;font-size:26px;line-height:26px;color:#7e8183;transform:scaleX(0.9384);">1 s 742 ms</span>
<div style="left:920px;top:1006px;width:2px;height:394px;background:#323232;"></div>
<svg style="left:949.0px;top:1020.0px;" width="30" height="30" viewBox="0 0 16 16"><path fill="#afb1b3" d="M1 2h12v8.200a4.800 4.800 0 0 0-3.800 3.300H1z"/><path fill="none" stroke="#3c3f41" stroke-width="1.600" d="M3.200 4.300l3.800 3.500-3.800 3.500"/><circle cx="12" cy="12.200" r="3.800" fill="#f2a73a"/><path fill="none" stroke="#3c3f41" stroke-width="1.100" d="M12 9.800v4.300M10.300 12.600L12 14.300l1.700-1.700"/></svg>
<span style="left:985.43px;top:1020.20px;font-size:26px;line-height:26px;color:#bbbbbb;transform:scaleX(0.9701);">Output</span>
<svg style="left:1076.7px;top:1027px;" width="15" height="15" viewBox="0 0 15 15"><path stroke="#6e7476" stroke-width="1.600" d="M1 1l12.500 12.500M13.500 1L1 13.500"/></svg>
<svg style="left:1138.0px;top:1018.0px;" width="32" height="32" viewBox="0 0 16 16"><path fill="#9aa7b0" fill-rule="evenodd" d="M1 2h14v12H1zM2 5v2h3v-2zM6 5v2h4v-2zM11 5v2h3v-2zM2 8v2h3v-2zM6 8v2h4v-2zM11 8v2h3v-2zM2 11v2h3v-2zM6 11v2h4v-2zM11 11v2h3v-2z"/></svg>
<span style="left:1177.49px;top:1020.20px;font-size:26px;line-height:26px;color:#bbbbbb;transform:scaleX(0.9097);">itcast.employee</span>
<svg style="left:1357px;top:1027px;" width="15" height="15" viewBox="0 0 15 15"><path stroke="#6e7476" stroke-width="1.600" d="M1 1l12.500 12.500M13.500 1L1 13.500"/></svg>
<div style="left:922px;top:1060px;width:1916px;height:2px;background:#323232;"></div>
<div style="left:1114px;top:1058px;width:282px;height:4px;background:#747a80;"></div>
<svg style="left:936.0px;top:1077.0px;" width="26" height="26" viewBox="0 0 16 16"><path fill="none" stroke="#5e6060" stroke-width="1.700" d="M3.500 2.500v11M12.500 2.800L7 8l5.500 5.200"/></svg>
<svg style="left:988.0px;top:1077.0px;" width="26" height="26" viewBox="0 0 16 16"><path fill="none" stroke="#5e6060" stroke-width="1.700" d="M10.700 2.800L5.200 8l5.500 5.200"/></svg>
<span style="left:1037.99px;top:1079.60px;font-size:22px;line-height:22px;color:#bbbbbb;transform:scaleX(1.0093);">1 row</span>
<svg style="left:1098.0px;top:1080.0px;" width="24" height="24" viewBox="0 0 16 16"><path fill="none" stroke="#7f8b91" stroke-width="1.8" d="M4.100 5L8 9l3.900-4"/></svg>
<svg style="left:1141.0px;top:1077.0px;" width="26" height="26" viewBox="0 0 16 16"><path fill="none" stroke="#5e6060" stroke-width="1.700" d="M5.300 2.800L10.800 8l-5.500 5.200"/></svg>
<svg style="left:1192.0px;top:1077.0px;" width="26" height="26" viewBox="0 0 16 16"><path fill="none" stroke="#5e6060" stroke-width="1.700" d="M12.500 2.500v11M3.500 2.800L9 8l-5.500 5.200"/></svg>
<div style="left:1238px;top:1070px;width:2px;height:44px;background:#555759;"></div>
<svg style="left:1256.5px;top:1075.0px;" width="30" height="30" viewBox="0 0 16 16"><path fill="none" stroke="#afb1b3" stroke-width="1.9" d="M12.9 6.2A5.2 5.2 0 0 0 3.6 5.4"/><path fill="none" stroke="#afb1b3" stroke-width="1.9" d="M3.1 9.8a5.2 5.2 0 0 0 9.3 0.8"/><path fill="#afb1b3" d="M1.8 2.2v5.2H7zM14.2 13.8V8.6H9z"/></svg>
<svg style="left:1307.5px;top:1074.0px;" width="32" height="32" viewBox="0 0 16 16"><rect x="3" y="3" width="10" height="10" fill="#5e6060"/></svg>
<div style="left:1356px;top:1070px;width:2px;height:44px;background:#555759;"></div>
<svg style="left:1374.0px;top:1074.0px;" width="32" height="32" viewBox="0 0 16 16"><path fill="#afb1b3" d="M7 3h2v4h4v2H9v4H7V9H3V7h4z"/></svg>
<svg style="left:1428.5px;top:1076.5px;" width="27" height="27" viewBox="0 0 16 16"><rect x="2" y="7" width="12" height="2" fill="#5e6060"/></svg>
<svg style="left:1479.5px;top:1074.0px;" width="31" height="31" viewBox="0 0 16 16"><path fill="none" stroke="#5e6060" stroke-width="1.800" d="M4.500 5.500h5.300a3.700 3.700 0 0 1 0 7.400H7"/><path fill="#5e6060" d="M1.200 5.500L5.800 1.800v7.400z"/></svg>
<svg style="left:1530.0px;top:1074.5px;" width="33" height="33" viewBox="0 0 16 16"><path fill="#5e6060" fill-rule="evenodd" d="M0.800 7.500C2.300 4.700 4.800 3 8 3s5.700 1.700 7.200 4.500c-.3.600-.7 1.200-1.100 1.700L11 6.300 8.500 9.600A2.600 2.600 0 1 1 10.300 6 2.600 2.600 0 0 0 8 5a2.500 2.500 0 0 0-.6 4.900L6.200 12C3.900 11.400 2 9.800.8 7.500z"/><path fill="#5e6060" d="M11 7.300l3.700 4.200h-2.500V15h-2.400v-3.500H7.300z"/></svg>
<svg style="left:1583.0px;top:1075.0px;" width="30" height="30" viewBox="0 0 16 16"><path fill="#5e6060" d="M8 1.500l6.200 6.800h-4v6.200H5.800V8.300h-4z"/></svg>
<div style="left:1630px;top:1070px;width:2px;height:44px;background:#555759;"></div>
<span style="left:1660.10px;top:1079.60px;font-size:22px;line-height:22px;color:#bbbbbb;transform:scaleX(0.9414);">Tx: Auto</span>
<svg style="left:1742.5px;top:1080.0px;" width="24" height="24" viewBox="0 0 16 16"><path fill="none" stroke="#7f8b91" stroke-width="1.8" d="M4.100 5L8 9l3.900-4"/></svg>
<div style="left:1784px;top:1070px;width:2px;height:44px;background:#555759;"></div>
<span style="left:1808.51px;top:1079.60px;font-size:22px;line-height:22px;color:#bbbbbb;transform:scaleX(0.8930);">DDL</span>
<div style="left:1870px;top:1070px;width:2px;height:44px;background:#555759;"></div>
<svg style="left:1887.5px;top:1074.0px;" width="32" height="32" viewBox="0 0 16 16"><path fill="#afb1b3" d="M10.400 0.800L15.350 5.750 11 8.500v3.650L8.250 9.850 1.100 15.200 6.350 7.800 3.700 5.300 7.500 4.900z"/></svg>
<span style="left:2468.37px;top:1079.60px;font-size:22px;line-height:22px;color:#bbbbbb;transform:scaleX(0.8348);">CSV</span>
<svg style="left:2512.5px;top:1080.0px;" width="24" height="24" viewBox="0 0 16 16"><path fill="none" stroke="#7f8b91" stroke-width="1.8" d="M4.100 5L8 9l3.900-4"/></svg>
<div style="left:2556px;top:1070px;width:2px;height:44px;background:#555759;"></div>
<svg style="left:2575.0px;top:1075.0px;" width="30" height="30" viewBox="0 0 16 16"><path fill="#afb1b3" d="M2 13h12v1.800H2zM7.100 1.500h1.800v6h3.300L8 11.800 3.800 7.500h3.300z"/></svg>
<svg style="left:2626.5px;top:1075.0px;" width="30" height="30" viewBox="0 0 16 16"><path fill="#afb1b3" d="M2 1.200h12V3H2zM7.100 14.500h1.800v-6h3.300L8 4.200 3.800 8.500h3.300z"/></svg>
<svg style="left:2677.0px;top:1074.0px;" width="32" height="32" viewBox="0 0 16 16"><path fill="#3592c4" d="M7.1 5L11.05 0.900V4.050h4v2.150h-4V8.850z"/><path fill="#3592c4" d="M9.050 11.200L5.050 7.200v2.800h-4v2.300h4v2.900z"/><path fill="#afb1b3" d="M11.5 14h5.6l-2.8 3z"/></svg>
<div style="left:2726px;top:1070px;width:2px;height:44px;background:#555759;"></div>
<svg style="left:2743.0px;top:1074.0px;" width="32" height="32" viewBox="0 0 16 16"><path fill="#afb1b3" fill-rule="evenodd" d="M0.500 7.500C2 4.700 4.700 3 8 3s6 1.700 7.500 4.500C14 10.300 11.300 12 8 12S2 10.300.5 7.500zM8 4.600a2.900 2.900 0 1 0 0 5.800 2.900 2.900 0 0 0 0-5.800z"/><circle cx="8" cy="7.500" r="1.500" fill="#afb1b3"/><path fill="#afb1b3" d="M11.5 14h5.6l-2.8 3z"/></svg>
<svg style="left:2796.0px;top:1074.0px;" width="32" height="32" viewBox="0 0 16 16"><path fill="#afb1b3" fill-rule="evenodd" d="M6.37 3.27 L6.52 1.57 L9.48 1.57 L9.63 3.27 L11.28 4.23 L12.83 3.50 L14.31 6.07 L12.91 7.05 L12.91 8.95 L14.31 9.93 L12.83 12.50 L11.28 11.77 L9.63 12.73 L9.48 14.43 L6.52 14.43 L6.37 12.73 L4.72 11.77 L3.17 12.50 L1.69 9.93 L3.09 8.95 L3.09 7.05 L1.69 6.07 L3.17 3.50 L4.72 4.23Z M5.70 8 a2.3 2.3 0 1 0 4.6 0 a2.3 2.3 0 1 0 -4.6 0Z"/><path fill="#afb1b3" d="M11.5 14h5.6l-2.8 3z"/></svg>
<div style="left:922px;top:1118px;width:1916px;height:282px;background:#2b2b2b;"></div>
<div style="left:922px;top:1118px;width:1653px;height:48px;background:#3b3b3b;"></div>
<div style="left:922px;top:1166px;width:1653px;height:4px;background:#343536;"></div>
<div style="left:922px;top:1170px;width:49px;height:44px;background:#3c3c3c;"></div>
<div style="left:970px;top:1118px;width:2px;height:48px;background:#343536;"></div>
<div style="left:970px;top:1170px;width:2px;height:44px;background:#3a3a3a;"></div>
<div style="left:1140px;top:1118px;width:2px;height:48px;background:#343536;"></div>
<div style="left:1140px;top:1170px;width:2px;height:44px;background:#3a3a3a;"></div>
<div style="left:1386px;top:1118px;width:2px;height:48px;background:#343536;"></div>
<div style="left:1386px;top:1170px;width:2px;height:44px;background:#3a3a3a;"></div>
<div style="left:1594px;top:1118px;width:2px;height:48px;background:#343536;"></div>
<div style="left:1594px;top:1170px;width:2px;height:44px;background:#3a3a3a;"></div>
<div style="left:1840px;top:1118px;width:2px;height:48px;background:#343536;"></div>
<div style="left:1840px;top:1170px;width:2px;height:44px;background:#3a3a3a;"></div>
<div style="left:2028px;top:1118px;width:2px;height:48px;background:#343536;"></div>
<div style="left:2028px;top:1170px;width:2px;height:44px;background:#3a3a3a;"></div>
<div style="left:2274px;top:1118px;width:2px;height:48px;background:#343536;"></div>
<div style="left:2274px;top:1170px;width:2px;height:44px;background:#3a3a3a;"></div>
<div style="left:922px;top:1214px;width:1653px;height:3px;background:#353739;"></div>
<svg style="left:1021.4px;top:1126.0px;" width="32" height="32" viewBox="0 0 16 16"><path fill="#8a969e" d="M1 2h5v12H1z"/><path fill="#9aa7b0" fill-rule="evenodd" d="M7 2h8v12H7zM7 5v2h3v-2zM11 5v2h3v-2zM7 8v2h3v-2zM11 8v2h3v-2zM7 11v2h3v-2zM11 11v2h3v-2z"/></svg>
<span class="mono" style="left:1060.90px;top:1129.50px;font-size:26px;line-height:26px;color:#a9b7c6;transform:scaleX(1.0487);">id</span>
<svg style="left:1113.0px;top:1134.4px;" width="10" height="15.6" viewBox="0 0 10 15.6"><path fill="#a0a3a5" d="M0 6.500L5 0l5 6.500zM0 9.100L5 15.600l5-6.500z"/></svg>
<svg style="left:1147.6px;top:1126.0px;" width="32" height="32" viewBox="0 0 16 16"><path fill="#8a969e" d="M1 2h5v12H1z"/><path fill="#9aa7b0" fill-rule="evenodd" d="M7 2h8v12H7zM7 5v2h3v-2zM11 5v2h3v-2zM7 8v2h3v-2zM11 8v2h3v-2zM7 11v2h3v-2zM11 11v2h3v-2z"/></svg>
<span class="mono" style="left:1189.00px;top:1129.50px;font-size:26px;line-height:26px;color:#a9b7c6;transform:scaleX(1.0123);">workno</span>
<svg style="left:1359.0px;top:1134.4px;" width="10" height="15.6" viewBox="0 0 10 15.6"><path fill="#a0a3a5" d="M0 6.500L5 0l5 6.500zM0 9.100L5 15.600l5-6.500z"/></svg>
<svg style="left:1394.0px;top:1126.0px;" width="32" height="32" viewBox="0 0 16 16"><path fill="#8a969e" d="M1 2h5v12H1z"/><path fill="#9aa7b0" fill-rule="evenodd" d="M7 2h8v12H7zM7 5v2h3v-2zM11 5v2h3v-2zM7 8v2h3v-2zM11 8v2h3v-2zM7 11v2h3v-2zM11 11v2h3v-2z"/></svg>
<span class="mono" style="left:1432.97px;top:1129.50px;font-size:26px;line-height:26px;color:#a9b7c6;transform:scaleX(1.0157);">name</span>
<svg style="left:1567.3px;top:1134.4px;" width="10" height="15.6" viewBox="0 0 10 15.6"><path fill="#a0a3a5" d="M0 6.500L5 0l5 6.500zM0 9.100L5 15.600l5-6.500z"/></svg>
<svg style="left:1602.5px;top:1126.0px;" width="32" height="32" viewBox="0 0 16 16"><path fill="#8a969e" d="M1 2h5v12H1z"/><path fill="#9aa7b0" fill-rule="evenodd" d="M7 2h8v12H7zM7 5v2h3v-2zM11 5v2h3v-2zM7 8v2h3v-2zM11 8v2h3v-2zM7 11v2h3v-2zM11 11v2h3v-2z"/></svg>
<span class="mono" style="left:1642.39px;top:1129.50px;font-size:26px;line-height:26px;color:#a9b7c6;transform:scaleX(1.0101);">gender</span>
<svg style="left:1813.3px;top:1134.4px;" width="10" height="15.6" viewBox="0 0 10 15.6"><path fill="#a0a3a5" d="M0 6.500L5 0l5 6.500zM0 9.100L5 15.600l5-6.500z"/></svg>
<svg style="left:1894.0px;top:1126.0px;" width="32" height="32" viewBox="0 0 16 16"><path fill="#8a969e" d="M1 2h5v12H1z"/><path fill="#9aa7b0" fill-rule="evenodd" d="M7 2h8v12H7zM7 5v2h3v-2zM11 5v2h3v-2zM7 8v2h3v-2zM11 8v2h3v-2zM7 11v2h3v-2zM11 11v2h3v-2z"/></svg>
<span class="mono" style="left:1932.98px;top:1129.50px;font-size:26px;line-height:26px;color:#a9b7c6;transform:scaleX(1.0153);">age</span>
<svg style="left:2001.3px;top:1134.4px;" width="10" height="15.6" viewBox="0 0 10 15.6"><path fill="#a0a3a5" d="M0 6.500L5 0l5 6.500zM0 9.100L5 15.600l5-6.500z"/></svg>
<svg style="left:2036.0px;top:1126.0px;" width="32" height="32" viewBox="0 0 16 16"><path fill="#8a969e" d="M1 2h5v12H1z"/><path fill="#9aa7b0" fill-rule="evenodd" d="M7 2h8v12H7zM7 5v2h3v-2zM11 5v2h3v-2zM7 8v2h3v-2zM11 8v2h3v-2zM7 11v2h3v-2zM11 11v2h3v-2z"/></svg>
<span class="mono" style="left:2074.94px;top:1129.50px;font-size:26px;line-height:26px;color:#a9b7c6;transform:scaleX(1.0303);">idcard</span>
<svg style="left:2247.1px;top:1134.4px;" width="10" height="15.6" viewBox="0 0 10 15.6"><path fill="#a0a3a5" d="M0 6.500L5 0l5 6.500zM0 9.100L5 15.600l5-6.500z"/></svg>
<svg style="left:2282.3px;top:1126.0px;" width="32" height="32" viewBox="0 0 16 16"><path fill="#8a969e" d="M1 2h5v12H1z"/><path fill="#9aa7b0" fill-rule="evenodd" d="M7 2h8v12H7zM7 5v2h3v-2zM11 5v2h3v-2zM7 8v2h3v-2zM11 8v2h3v-2zM7 11v2h3v-2zM11 11v2h3v-2z"/></svg>
<span class="mono" style="left:2321.99px;top:1129.50px;font-size:26px;line-height:26px;color:#a9b7c6;transform:scaleX(1.0127);">entrydate</span>
<svg style="left:2551.0px;top:1134.4px;" width="10" height="15.6" viewBox="0 0 10 15.6"><path fill="#a0a3a5" d="M0 6.500L5 0l5 6.500zM0 9.100L5 15.600l5-6.500z"/></svg>
<span class="mono" style="left:935.91px;top:1180.00px;font-size:26px;line-height:26px;color:#a9b7c6;transform:scaleX(1.1636);">1</span>
<span class="mono" style="left:1114.02px;top:1180.00px;font-size:26px;line-height:26px;color:#a9b7c6;transform:scaleX(1.1273);">1</span>
<span class="mono" style="left:1146.22px;top:1180.00px;font-size:26px;line-height:26px;color:#a9b7c6;transform:scaleX(1.1273);">1</span>
<span class="mono" style="left:1393.96px;top:1180.00px;font-size:26px;line-height:26px;color:#a9b7c6;transform:scaleX(1.0192);">Itcast</span>
<span class="cjk" style="left:1604.60px;top:1181.50px;font-size:24px;line-height:24px;color:#a9b7c6;transform:scaleX(0.9167);">女</span>
<span class="mono" style="left:1985.19px;top:1180.00px;font-size:26px;line-height:26px;color:#a9b7c6;transform:scaleX(1.1368);">10</span>
<span class="mono" style="left:2033.89px;top:1180.00px;font-size:26px;line-height:26px;color:#a9b7c6;transform:scaleX(1.0362);">12345678910</span>
<span class="mono" style="left:2281.77px;top:1180.00px;font-size:26px;line-height:26px;color:#a9b7c6;transform:scaleX(1.0268);">2003-01-01</span>
<div style="left:910.500px;top:1114.300px;width:1660.500px;height:98.700px;border:4.200px solid #ed1c24;border-radius:4px"></div>
<span style="left:2722.10px;top:1374.90px;font-size:16px;line-height:16px;color:#d4d4d4;transform:scaleX(0.9518);text-shadow:0 0 2px #1a1a1a;">CSDN @Aileen_0v0</span>
</div>
</div></body></html>
